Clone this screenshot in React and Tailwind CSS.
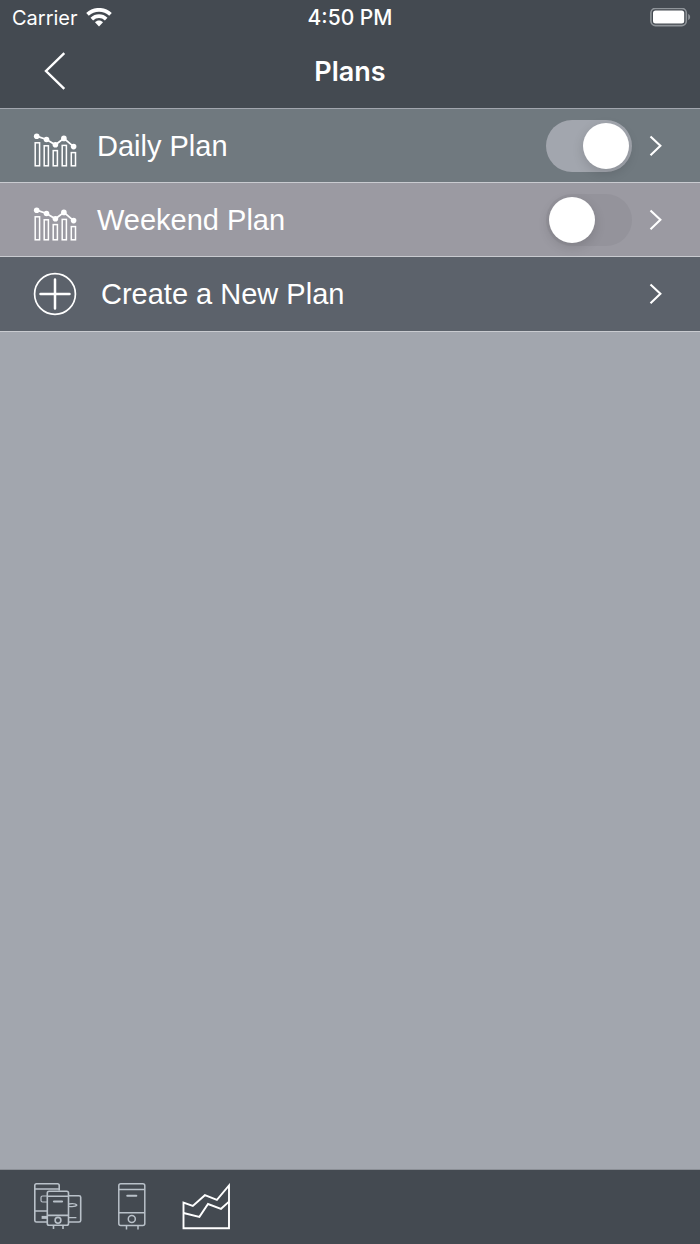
import { useState } from 'react';

const initialPlans = [
  { id: 'daily', name: 'Daily Plan', enabled: true, row: 'bg-[#70797f]' },
  { id: 'weekend', name: 'Weekend Plan', enabled: false, row: 'bg-[#9b9aa2]' },
];

function WifiIcon() {
  return (
    <svg className="w-[26px] h-5" viewBox="0 0 26 20" fill="none" stroke="white" strokeWidth="3.8" aria-hidden="true">
      <path d="M1.5 6.4 C8 0.3 18 0.3 24.5 6.4" />
      <path d="M5.8 11.1 C10 7.2 16 7.2 20.2 11.1" />
      <path d="M9 14.3 C11.4 12 14.6 12 17 14.3 L13 18.6Z" fill="white" stroke="none" />
    </svg>
  );
}

function BatteryIcon() {
  return (
    <svg className="w-[42px] h-5" viewBox="0 0 42 20" fill="none" aria-hidden="true">
      <rect x="0.9" y="0.4" width="35.4" height="17.2" rx="4.5" stroke="#8f9499" strokeWidth="1.6" />
      <rect x="3" y="2.6" width="31.2" height="12.8" rx="2.5" fill="white" />
      <path d="M38.2 6 C40.8 7.1 40.8 10.9 38.2 12Z" fill="#8f9499" />
    </svg>
  );
}

function ChartBarsIcon() {
  return (
    <svg className="w-11 h-9" viewBox="0 0 44 36" fill="none" stroke="white" aria-hidden="true">
      <g strokeWidth="1.5">
        <rect x="2.2" y="10.8" width="4.4" height="23" />
        <rect x="11.2" y="13.8" width="4.2" height="20" />
        <rect x="20.2" y="18.6" width="4.2" height="15.2" />
        <rect x="29.2" y="13.4" width="4.2" height="20.4" />
        <rect x="38.3" y="20.6" width="4.2" height="13.2" />
      </g>
      <path d="M3.7 4.2 L13.5 7.5 L22.4 12.8 L30.9 6.4 L40.6 14.6" strokeWidth="1.8" />
      <g fill="white" stroke="none">
        <circle cx="3.7" cy="4.2" r="2.8" />
        <circle cx="13.5" cy="7.5" r="2.8" />
        <circle cx="22.4" cy="12.8" r="2.8" />
        <circle cx="30.9" cy="6.4" r="2.8" />
        <circle cx="40.6" cy="14.6" r="2.8" />
      </g>
    </svg>
  );
}

function PlusCircleIcon() {
  return (
    <svg className="w-11 h-11" viewBox="0 0 44 44" fill="none" stroke="white" strokeLinecap="round" aria-hidden="true">
      <circle cx="22" cy="22" r="20.4" strokeWidth="1.7" />
      <path d="M22 7.5 V36.5 M7.5 22 H36.5" strokeWidth="2.5" />
    </svg>
  );
}

function ChevronIcon() {
  return (
    <svg className="w-4 h-6" viewBox="0 0 16 24" fill="none" stroke="white" strokeWidth="2.1" aria-hidden="true">
      <path d="M2.5 2.4 L12.4 11.8 L2.5 21.2" />
    </svg>
  );
}

function BoilersIcon() {
  return (
    <svg className="w-12 h-12" viewBox="0 0 48 48" fill="none" stroke="#b9c1c9" strokeWidth="1.6" aria-hidden="true">
      <path d="M25.2 7.4 V2.5 Q25.2 0.8 23.5 0.8 H2.5 Q0.8 0.8 0.8 2.5 V37.4 Q0.8 39 2.5 39 H13 M0.8 6 H25.2 M0.8 28 H13" />
      <path d="M13 13 H8.6 Q7 13 7 14.5 V17.5 Q7 19 8.6 19 H13" strokeWidth="1.2" />
      <path d="M7.6 34.4 H13" strokeWidth="3" />
      <path d="M34.7 12.7 H45 Q46.7 12.7 46.7 14.2 V37.5 Q46.7 39 45 39 H34.7" />
      <path d="M34.7 21 Q41.5 20 42.8 22.2 Q41.5 24.2 34.7 23.4 M34.7 34.7 H42.4" strokeWidth="1.3" />
      <rect x="13.3" y="8.2" width="21.2" height="34" rx="1.8" />
      <path d="M13.3 13.2 H34.5 M13.3 32.4 H34.5" />
      <path d="M20 18.5 H28" strokeWidth="2.2" strokeLinecap="round" />
      <circle cx="24" cy="37.3" r="2.9" />
      <path d="M19.5 42.5 V46 M29 42.5 V46" />
    </svg>
  );
}

function BoilerIcon() {
  return (
    <svg className="w-7 h-12" viewBox="0 0 28 48" fill="none" stroke="#b9c1c9" strokeWidth="1.5" aria-hidden="true">
      <rect x="0.8" y="0.8" width="26" height="41.6" rx="2" />
      <path d="M0.8 6.6 H26.8 M0.8 29.8 H26.8" />
      <path d="M9.3 12.8 H18.3" strokeWidth="2.1" strokeLinecap="round" />
      <circle cx="13.8" cy="36.1" r="3.5" />
      <path d="M8.5 42.5 V46.4 M20 42.5 V46.4" />
    </svg>
  );
}

function AreaChartIcon() {
  return (
    <svg className="w-12 h-12" viewBox="0 0 48 48" fill="none" stroke="white" strokeWidth="1.9" aria-hidden="true">
      <path d="M1.5 45.2 V19.7 L10.8 22.9 L22.9 12.2 L34.9 16.9 L47 2.5 V45.2Z" />
      <path d="M1.5 30 L17.4 33.9 L26 21 L39 25.8 L47 18.6" />
    </svg>
  );
}

function Toggle({ label, checked, onChange }) {
  return (
    <label className={`flex items-center w-[86px] h-[52px] px-[3px] rounded-full cursor-pointer ${checked ? 'justify-end bg-[#a2a6ae]' : 'justify-start bg-[#94939b]'}`}>
      <input type="checkbox" role="switch" className="sr-only" aria-label={label} checked={checked} onChange={onChange} />
      <span className="w-[46px] h-[46px] rounded-full bg-white shadow-[0_4px_12px_rgba(0,0,0,0.14)]" />
    </label>
  );
}

export default function App() {
  const [plans, setPlans] = useState(initialPlans);

  const togglePlan = (id) => {
    setPlans(plans.map((p) => (p.id === id ? { ...p, enabled: !p.enabled } : p)));
  };

  return (
    <div className="min-h-screen flex flex-col bg-[#a2a6ae] text-white font-['Liberation_Sans',Arial,sans-serif]">
      <header className="bg-[#444a51] border-b border-[#a2a6ae] font-[Inter,sans-serif]">
        <div className="grid grid-cols-3 items-center h-9 px-2 text-[20px]">
          <div className="flex items-center gap-2 pl-1">
            <span>Carrier</span>
            <WifiIcon />
          </div>
          <span className="text-center text-[21px] font-medium">4:50 PM</span>
          <div className="flex justify-end">
            <BatteryIcon />
          </div>
        </div>
        <div className="grid grid-cols-3 items-center h-[72px] px-8">
          <button type="button" aria-label="Back" className="w-11 h-11 flex items-center justify-center">
            <svg className="w-6 h-10" viewBox="0 0 24 40" fill="none" stroke="white" strokeWidth="2.4" aria-hidden="true">
              <path d="M22.3 1.2 L4 19 L22.3 36.8" />
            </svg>
          </button>
          <h1 className="text-center text-[27px] font-semibold">Plans</h1>
        </div>
      </header>

      <main className="flex-1">
        <ul>
          {plans.map((plan) => (
            <li key={plan.id} className={`flex items-center h-[74px] pl-[33px] pr-9 border-b border-[#c9cbd0] ${plan.row}`}>
              <span className="pt-2"><ChartBarsIcon /></span>
              <span className="flex-1 pl-5 pt-[2px] text-[29px]">{plan.name}</span>
              <Toggle label={plan.name} checked={plan.enabled} onChange={() => togglePlan(plan.id)} />
              <button type="button" aria-label={`Open ${plan.name}`} className="ml-4">
                <ChevronIcon />
              </button>
            </li>
          ))}
          <li>
            <button type="button" className="flex items-center w-full h-[75px] pl-[33px] pr-9 border-b border-[#c9cbd0] bg-[#5c626b] text-left">
              <PlusCircleIcon />
              <span className="flex-1 pl-6 pt-[2px] text-[29px]">Create a New Plan</span>
              <ChevronIcon />
            </button>
          </li>
        </ul>
      </main>

      <nav className="flex items-center gap-9 h-[75px] px-[34px] bg-[#444a51] border-t border-[#8b8f96]">
        <a href="#devices" aria-label="Devices"><BoilersIcon /></a>
        <a href="#device" aria-label="Device"><BoilerIcon /></a>
        <a href="#plans" aria-label="Plans"><AreaChartIcon /></a>
      </nav>
    </div>
  );
}
